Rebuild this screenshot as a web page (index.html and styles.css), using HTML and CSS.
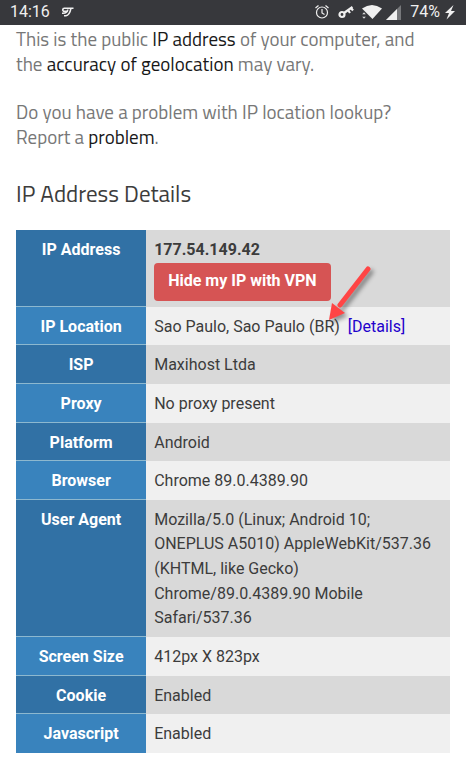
FILE: index.html
```html
<!DOCTYPE html>
<html lang="en">
<head>
<meta charset="utf-8">
<meta name="viewport" content="width=device-width, initial-scale=1">
<title>IP Address Details</title>
<link rel="stylesheet" href="styles.css">
</head>
<body>
<header class="status">
  <div class="status-group">
    <span>14:16</span>
    <svg class="brand" width="13" height="10" viewBox="0 0 13 10" aria-hidden="true"><path d="M12.500 1.200H2.500M2.500 1.200Q1 3.500 2.500 4.200H6.500M6.800 2.500Q6.500 6.500 1 6.200M10 1.200Q8.500 8.500 5 8.800H3" fill="none" stroke="currentColor" stroke-width="1.600"/></svg>
  </div>
  <div class="status-group status-right">
    <svg width="16" height="16" viewBox="0 0 15 16" aria-hidden="true"><g fill="none" stroke="currentColor" stroke-width="1.200"><circle cx="7.500" cy="8.500" r="5.500"/><path d="M7.500 5v4l2.500 1.500M1 4l3-2.500M14 4l-3-2.500"/></g></svg>
    <svg class="key" width="16" height="14" viewBox="0 0 16 14" aria-hidden="true"><circle cx="4" cy="9.500" r="2.500" fill="none" stroke="currentColor" stroke-width="2.200"/><path d="M6 8L14.500 2M10 5l2 3M13 3l2 2.500" fill="none" stroke="currentColor" stroke-width="2.200"/></svg>
    <svg class="wifi" width="20" height="16" viewBox="0 0 20 16" aria-hidden="true"><path d="M0 4.500Q10-2.500 20 4.500L10.500 15z" fill="currentColor"/><path d="M0 10.500l2-2.500 2 2.500zM0 12.500h4L2 15z" fill="currentColor" stroke="#37383c" stroke-width=".5"/></svg>
    <svg class="signal" width="15" height="15" viewBox="0 0 15 15" aria-hidden="true"><path d="M15 0v15H0z" fill="#77787b"/><path d="M11 4v11H0z" fill="currentColor"/></svg>
    <span class="level">74%</span>
    <svg width="10" height="16" viewBox="0 0 10 16" aria-hidden="true"><path d="M8.500 1L0 9h4L1.500 15.500 10 7H6z" fill="currentColor"/></svg>
  </div>
</header>
<main class="page">
  <p class="intro">This is the public <a href="#">IP address</a> of your computer, and<br>the <a href="#">accuracy of geolocation</a> may vary.</p>
  <p class="intro">Do you have a problem with IP location lookup?<br>Report a <a href="#">problem</a>.</p>
  <h2 class="title">IP Address Details</h2>
  <div class="details">
    <table class="facts">
      <tbody>
        <tr><th scope="row">IP Address</th><td><strong>177.54.149.42</strong><button class="hide" type="button">Hide my IP with VPN</button></td></tr>
        <tr><th scope="row">IP Location</th><td><span class="place">Sao Paulo, Sao Paulo (BR)<svg class="pointer" width="50" height="62" viewBox="0 0 50 62" aria-hidden="true"><path d="M40 5L12 41" stroke="#ff4545" stroke-width="5" stroke-linecap="round"/><path d="M1 56L4 39 17 49z" fill="#ff4545"/></svg></span>&nbsp; <a class="more" href="#">[Details]</a></td></tr>
        <tr><th scope="row">ISP</th><td>Maxihost Ltda</td></tr>
        <tr><th scope="row">Proxy</th><td>No proxy present</td></tr>
        <tr><th scope="row">Platform</th><td>Android</td></tr>
        <tr><th scope="row">Browser</th><td>Chrome 89.0.4389.90</td></tr>
        <tr><th scope="row">User Agent</th><td>Mozilla/5.0 (Linux; Android 10; ONEPLUS A5010) AppleWebKit/537.36 (KHTML, like Gecko) Chrome/89.0.4389.90 Mobile Safari/537.36</td></tr>
        <tr><th scope="row">Screen Size</th><td>412px X 823px</td></tr>
        <tr><th scope="row">Cookie</th><td>Enabled</td></tr>
        <tr><th scope="row">Javascript</th><td>Enabled</td></tr>
      </tbody>
    </table>
  </div>
</main>
</body>
</html>
```
FILE: styles.css
```css
* { box-sizing: border-box; }
body {
  margin: 0;
  background: #fff;
  color: #3c3c3c;
  font-family: Roboto, sans-serif;
  font-size: 16px;
  line-height: 1.54;
}
.status {
  display: flex;
  justify-content: space-between;
  align-items: center;
  height: 25px;
  padding: 0 11px 1px 10px;
  background: #37383c;
  color: #f0f0f0;
}
.status-group { display: flex; align-items: center; }
.brand { margin-left: 11px; }
.key { margin-left: 8px; }
.wifi { margin-left: 8px; }
.signal { margin-left: 4px; }
.level { margin: 0 5px 0 9px; }
.page { padding: 1px 16px 12px; }
.intro {
  margin: 0 0 23px;
  color: #777;
  font-family: "Titillium Web", Roboto, sans-serif;
  font-size: 19px;
  font-weight: 400;
  line-height: 25px;
}
.intro a { color: #181818; text-decoration: none; }
.title {
  margin: 31px 0 22px;
  color: #3c3c3c;
  font-family: "Titillium Web", Roboto, sans-serif;
  font-size: 23px;
  font-weight: 400;
  line-height: 28px;
}
.facts {
  width: 100%;
  border-collapse: separate;
  border-spacing: 0;
  table-layout: fixed;
}
.facts th, .facts td { padding: 8px 8px 6px; vertical-align: top; }
.facts th {
  width: 30%;
  background: #3983bd;
  color: #fff;
  font-weight: 700;
  text-align: center;
  box-shadow: inset 0 -1px #8db8cf;
}
.facts tr:last-child th { box-shadow: none; }
.facts td { background: #f0f0f0; }
.facts tr:nth-child(odd) th { background: #3171a5; }
.facts tr:nth-child(odd) td { background: #d9d9d9; }
.hide {
  display: block;
  height: 38px;
  padding: 0 14px;
  border: 0;
  border-radius: 4px;
  background: #d65454;
  color: #fff;
  font: inherit;
  font-weight: 700;
}
.more { color: #20c; text-decoration: none; }
.place { position: relative; }
.pointer {
  position: absolute;
  right: -38px;
  bottom: 10px;
  filter: drop-shadow(3px 3px 2px rgba(0, 0, 0, .4));
}
```
